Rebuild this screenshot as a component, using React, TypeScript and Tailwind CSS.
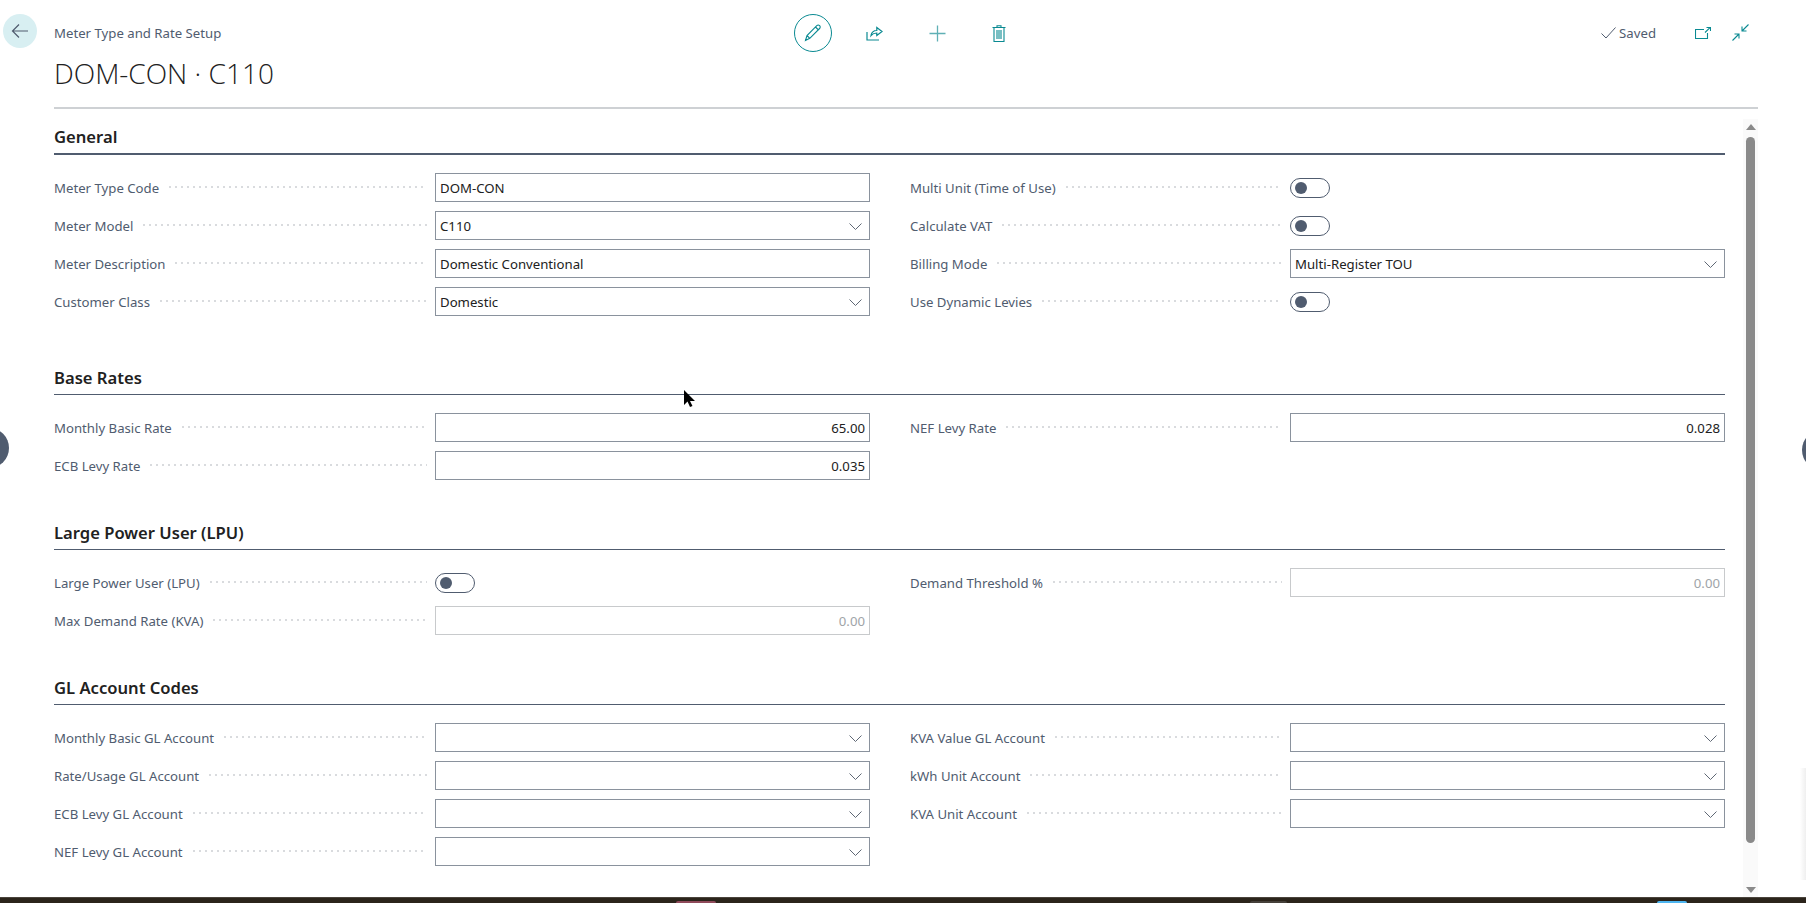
type FieldProps = {
    label: string;
    value?: string;
    kind?: "text" | "select" | "number" | "toggle" | "disabled";
};

function Field({ label, value = "", kind = "text", narrow }: FieldProps & { narrow?: boolean }) {
    return (
        <div className="flex h-[29px] items-center">
            <div className={`flex shrink-0 items-center overflow-hidden ${narrow ? "w-[380px]" : "w-[381px]"}`}>
                <span className="shrink-0 pt-[2px] text-[#505c6f]">{label}</span>
                <span className="ml-[10px] mr-[8px] h-[2px] grow bg-[linear-gradient(to_right,#d9dbde_2px,transparent_2px)] bg-[length:6px_2px]"></span>
            </div>
            {kind === "toggle" ? (
                <div className="flex h-[20px] w-[40px] items-center rounded-full border border-[#505c6f] pl-[4px]">
                    <div className="size-[12px] rounded-full bg-[#505c6f]"></div>
                </div>
            ) : (
                <div
                    className={`flex h-[29px] grow items-center border px-[4px] ${
                        kind === "disabled"
                            ? "border-[#c8cacc] text-[#a0a4a8]"
                            : "border-[#8a929d] text-[#212121]"
                    } ${kind === "number" || kind === "disabled" ? "justify-end" : ""}`}
                >
                    <span className="pt-[2px]">{value}</span>
                    {kind === "select" && (
                        <svg className="ml-auto mr-[3px] mt-[2px]" width="13" height="7" viewBox="0 0 13 7" fill="none" stroke="#5f6875" strokeWidth="1">
                            <path d="M.5.5l6 6 6-6" />
                        </svg>
                    )}
                </div>
            )}
        </div>
    );
}

function Section({
    title,
    left,
    right,
    thick,
    className,
}: {
    title: string;
    left: FieldProps[];
    right: FieldProps[];
    thick?: boolean;
    className?: string;
}) {
    return (
        <section className={className}>
            <h2 className="flex h-[29px] items-center pt-[2px] text-[16.6px] font-semibold text-[#212121]">
                {title}
            </h2>
            <div className={`mt-[2px] bg-[#505c6f] ${thick ? "h-[2px]" : "h-px"}`}></div>
            <div className="mt-[18px] grid grid-cols-[816px_815px] gap-x-[40px]">
                <div className="flex flex-col gap-[9px]">
                    {left.map((f) => (
                        <Field key={f.label} {...f} />
                    ))}
                </div>
                <div className="flex flex-col gap-[9px]">
                    {right.map((f) => (
                        <Field key={f.label} narrow {...f} />
                    ))}
                </div>
            </div>
        </section>
    );
}

export default function App() {
    return (
        <div className="relative flex h-[903px] w-[1806px] flex-col overflow-hidden bg-white font-['Noto_Sans',sans-serif] text-[13.2px]">
            <header className="flex h-[109px] shrink-0">
                <div className="pl-[3px] pt-[14px]">
                    <button className="flex size-[34px] items-center justify-center rounded-full bg-[#d8eff2] text-[#505c6f]">
                        <svg width="18" height="16" viewBox="0 0 18 16" fill="none" stroke="currentColor" strokeWidth="1.2">
                            <path d="M17 8H1.5M8 1.5 1.5 8 8 14.5" />
                        </svg>
                    </button>
                </div>
                <div className="ml-[17px] flex w-[1704px] flex-col border-b-2 border-[#ced1d4]">
                    <div className="flex h-[66px] shrink-0 items-center">
                        <span className="w-[740px] shrink-0 pt-[2px] text-[#505c6f]">Meter Type and Rate Setup</span>
                        <div className="flex items-center text-[#0a8a92]">
                            <button className="flex size-[38px] items-center justify-center rounded-full border border-[#0a8a92]">
                                <svg width="18" height="18" viewBox="0 0 18 18" fill="none" stroke="currentColor" strokeWidth="1.1">
                                    <path d="M1.5 16.5 3 11.500 12.800 1.700c.8-.8 2-.8 2.800 0s.8 2 0 2.800L5.800 14.300 1.500 16.500ZM3 11.500l2.800 2.800M11.500 3l3 3" />
                                </svg>
                            </button>
                            <svg className="ml-[34px]" width="17" height="15" viewBox="0 0 17 15" fill="none" stroke="currentColor" strokeWidth="1.2">
                                <path d="M1 6v8h12M5 9.500C5.500 6.500 8 4.500 10.800 4.500V1.500L16 5.500l-5.200 4V7C8.500 7 6.500 7.800 5 9.500Z" />
                            </svg>
                            <svg className="ml-[46px]" width="17" height="17" viewBox="0 0 17 17" fill="none" stroke="#5fb0b5" strokeWidth="1.3">
                                <path d="M8.500 0.500v16M0.500 8.500h16" />
                            </svg>
                            <svg className="ml-[46px]" width="14" height="17" viewBox="0 0 14 17" fill="none" stroke="currentColor" strokeWidth="1.1">
                                <path d="M0.500 2.500h13M5 2.500V.7h4v1.800M2 2.500v14h10v-14M5 5v9M7 5v9M9 5v9" />
                            </svg>
                        </div>
                        <div className="ml-auto mr-[9px] flex items-center text-[#505c6f]">
                            <svg width="15" height="12" viewBox="0 0 15 12" fill="none" stroke="currentColor" strokeWidth="1">
                                <path d="M0.500 6.500 5 11 14.500 0.500" />
                            </svg>
                            <span className="ml-[3px] pt-[2px]">Saved</span>
                            <svg className="ml-[39px] text-[#0a8a92]" width="16" height="12" viewBox="0 0 16 12" fill="none" stroke="currentColor" strokeWidth="1.1">
                                <path d="M9 2.500H0.500v9h12V6M10 5.500 15 .7M11.500.500H15.500V4" />
                            </svg>
                            <svg className="ml-[21px] text-[#0a8a92]" width="17" height="17" viewBox="0 0 17 17" fill="none" stroke="currentColor" strokeWidth="1.1">
                                <path d="M16.500.500 10 7M10 2.500V7H14.500M.500 16.500 7 10M2.500 10H7V14.500" />
                            </svg>
                        </div>
                    </div>
                    <h1 className="-mt-[11px] font-['Open_Sans',sans-serif] text-[28px] font-light leading-[36px] text-[#212121]">
                        DOM-CON · C110
                    </h1>
                </div>
            </header>

            <div className="flex min-h-0 grow">
                <main className="ml-[54px] w-[1671px] shrink-0">
                    <Section
                        title="General"
                        thick
                        className="pt-[13px]"
                        left={[
                            { label: "Meter Type Code", value: "DOM-CON" },
                            { label: "Meter Model", value: "C110", kind: "select" },
                            { label: "Meter Description", value: "Domestic Conventional" },
                            { label: "Customer Class", value: "Domestic", kind: "select" },
                        ]}
                        right={[
                            { label: "Multi Unit (Time of Use)", kind: "toggle" },
                            { label: "Calculate VAT", kind: "toggle" },
                            { label: "Billing Mode", value: "Multi-Register TOU", kind: "select" },
                            { label: "Use Dynamic Levies", kind: "toggle" },
                        ]}
                    />
                    <Section
                        title="Base Rates"
                        className="mt-[47px]"
                        left={[
                            { label: "Monthly Basic Rate", value: "65.00", kind: "number" },
                            { label: "ECB Levy Rate", value: "0.035", kind: "number" },
                        ]}
                        right={[{ label: "NEF Levy Rate", value: "0.028", kind: "number" }]}
                    />
                    <Section
                        title="Large Power User (LPU)"
                        className="mt-[38px]"
                        left={[
                            { label: "Large Power User (LPU)", kind: "toggle" },
                            { label: "Max Demand Rate (KVA)", value: "0.00", kind: "disabled" },
                        ]}
                        right={[{ label: "Demand Threshold %", value: "0.00", kind: "disabled" }]}
                    />
                    <Section
                        title="GL Account Codes"
                        className="mt-[38px]"
                        left={[
                            { label: "Monthly Basic GL Account", kind: "select" },
                            { label: "Rate/Usage GL Account", kind: "select" },
                            { label: "ECB Levy GL Account", kind: "select" },
                            { label: "NEF Levy GL Account", kind: "select" },
                        ]}
                        right={[
                            { label: "KVA Value GL Account", kind: "select" },
                            { label: "kWh Unit Account", kind: "select" },
                            { label: "KVA Unit Account", kind: "select" },
                        ]}
                    />
                </main>
                <aside className="ml-[18px] mt-[10px] flex w-[15px] flex-col items-center bg-[#fafafa]">
                    <div className="mt-[5px] size-0 border-x-[5px] border-b-[6px] border-x-transparent border-b-[#8a8a8a]"></div>
                    <div className="mt-[7px] h-[706px] w-[9px] rounded-full bg-[#8a8a8a]"></div>
                    <div className="mt-auto mb-[4px] size-0 border-x-[5px] border-t-[6px] border-x-transparent border-t-[#8a8a8a]"></div>
                </aside>
            </div>

            <div className="flex h-[6px] shrink-0 items-end border-t border-[#4a443c] bg-[#2b241b]">
                <div className="ml-[676px] h-[2px] w-[40px] rounded-t bg-[#8f4a5a]"></div>
                <div className="ml-[534px] h-[2px] w-[37px] rounded-t bg-[#45403a]"></div>
                <div className="ml-[370px] h-[2px] w-[30px] rounded-t bg-[#4db5f0]"></div>
            </div>

            <div className="absolute -left-[31px] top-[428px] size-[40px] rounded-full bg-[#505c6f]"></div>
            <div className="absolute left-[1802px] top-[430px] size-[40px] rounded-full bg-[#505c6f]"></div>
            <div className="absolute right-0 top-[768px] h-[112px] w-[6px] bg-gradient-to-r from-transparent to-[#efefef]"></div>
            <svg className="absolute left-[683px] top-[390px]" width="13" height="18" viewBox="0 0 13 18">
                <path d="M1 0v15l3.500-3.500L7 17l2.500-1-2.500-5h5Z" fill="#000" />
            </svg>
        </div>
    );
}
